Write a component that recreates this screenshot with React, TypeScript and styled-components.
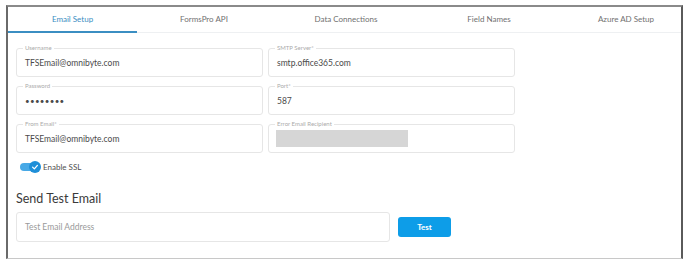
import React from 'react'
import styled, { createGlobalStyle } from 'styled-components'

const GlobalStyle = createGlobalStyle`
  html, body {
    margin: 0;
    padding: 0;
    background: #ffffff;
    font-family: Lato, 'Open Sans', sans-serif;
  }
`

const Page = styled.div`
  width: 688px;
  height: 261px;
  padding: 5px 5px 2px 6px;
  box-sizing: border-box;
`

const Frame = styled.div`
  height: 254px;
  box-sizing: border-box;
  border-top: 2px solid #8a8a8a;
  border-left: 2px solid #6a6a6a;
  border-right: 2px solid #5a5a5a;
  border-bottom: 1px solid #c8c8c8;
  background: #fff;
`

const TabBar = styled.div`
  display: flex;
  height: 25px;
  border-bottom: 1px solid #eef0f2;
`

const Tab = styled.div<{ $active?: boolean; $w?: number }>`
  flex: ${(p) => (p.$w ? `0 0 ${p.$w}px` : '1 1 auto')};
  padding-left: ${(p) => (p.$w ? '0' : '14px')};
  display: flex;
  align-items: center;
  justify-content: center;
  font-size: 8px;
  color: ${(p) => (p.$active ? '#3b8ec2' : '#707070')};
  border-bottom: 2px solid ${(p) => (p.$active ? '#3b8ec2' : 'transparent')};
  margin-bottom: -1px;
`

const Body = styled.div`
  padding: 15px 0 0 8px;
`

const Grid = styled.div`
  display: grid;
  grid-template-columns: 247px 247px;
  column-gap: 5px;
  row-gap: 9px;
`

const Field = styled.div`
  position: relative;
  height: 29px;
  box-sizing: border-box;
  border: 1px solid #e6e6e6;
  border-radius: 3px;
  display: flex;
  align-items: center;
  padding-left: 8px;
`

const Label = styled.span`
  position: absolute;
  top: -5px;
  left: 6px;
  padding: 0 2px;
  background: #fff;
  font-size: 6px;
  line-height: 8px;
  color: #ababab;
`

const Value = styled.span<{ $dots?: boolean }>`
  font-size: ${(p) => (p.$dots ? '8px' : '8.5px')};
  letter-spacing: ${(p) => (p.$dots ? '0.3px' : '0')};
  color: #4a4a4a;
  padding-top: 1px;
`

const Blocked = styled.div`
  width: 132px;
  height: 17px;
  background: #d6d6d6;
  margin-left: -1px;
`

const SwitchRow = styled.div`
  display: flex;
  align-items: center;
  gap: 4px;
  margin: 9px 0 0 4px;
  font-size: 8px;
  color: #505050;
`

const Track = styled.div`
  position: relative;
  width: 19px;
  height: 8px;
  border-radius: 4px;
  background: #48a9e6;
`

const Knob = styled.div`
  position: absolute;
  right: -2px;
  top: -2px;
  width: 12px;
  height: 12px;
  border-radius: 50%;
  background: #1f8fd8;
  display: flex;
  align-items: center;
  justify-content: center;
`

const Heading = styled.div`
  margin-top: 19px;
  font-size: 12.5px;
  color: #3a3a3a;
`

const TestRow = styled.div`
  display: flex;
  align-items: center;
  gap: 8px;
  margin-top: 6px;
`

const TestInput = styled.div`
  width: 374px;
  height: 30px;
  box-sizing: border-box;
  border: 1px solid #e6e6e6;
  border-radius: 3px;
  display: flex;
  align-items: center;
  padding-left: 8px;
  font-size: 8.5px;
  color: #9a9a9a;
`

const Button = styled.div`
  width: 53px;
  height: 20px;
  border-radius: 3px;
  background: #0d9de8;
  color: #fff;
  font-size: 8px;
  font-weight: 700;
  display: flex;
  align-items: center;
  justify-content: center;
`

const tabs: [string, number | undefined][] = [
  ['Email Setup', 129],
  ['FormsPro API', 134],
  ['Data Connections', 150],
  ['Field Names', 136],
  ['Azure AD Setup', undefined]
]

export default function App() {
  return (
    <>
      <GlobalStyle />
      <Page>
        <Frame>
          <TabBar>
            {tabs.map(([t, w], i) => (
              <Tab key={t} $active={i === 0} $w={w}>
                {t}
              </Tab>
            ))}
          </TabBar>
          <Body>
            <Grid>
              <Field>
                <Label>Username</Label>
                <Value>TFSEmail@omnibyte.com</Value>
              </Field>
              <Field>
                <Label>SMTP Server*</Label>
                <Value>smtp.office365.com</Value>
              </Field>
              <Field>
                <Label>Password</Label>
                <Value $dots>••••••••</Value>
              </Field>
              <Field>
                <Label>Port*</Label>
                <Value>587</Value>
              </Field>
              <Field>
                <Label>From Email*</Label>
                <Value>TFSEmail@omnibyte.com</Value>
              </Field>
              <Field>
                <Label>Error Email Recipient</Label>
                <Blocked />
              </Field>
            </Grid>
            <SwitchRow>
              <Track>
                <Knob>
                  <svg width="8" height="8" viewBox="0 0 10 10">
                    <path d="M2 5.2 L4.2 7.3 L8 3" fill="none" stroke="#fff" strokeWidth="1.6" strokeLinecap="round" strokeLinejoin="round" />
                  </svg>
                </Knob>
              </Track>
              <span>Enable SSL</span>
            </SwitchRow>
            <Heading>Send Test Email</Heading>
            <TestRow>
              <TestInput>Test Email Address</TestInput>
              <Button>Test</Button>
            </TestRow>
          </Body>
        </Frame>
      </Page>
    </>
  )
}
